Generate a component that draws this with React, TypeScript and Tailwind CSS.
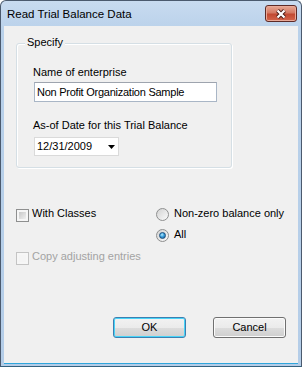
import React from 'react';

const CheckBox: React.FC<{ label: string; disabled?: boolean }> = ({ label, disabled }) => (
  <div className="flex items-start h-[13px] leading-[13px]">
    <span
      className={`mt-[2px] w-[13px] h-[13px] border p-[2px] bg-[#f6f6f6] ${
        disabled ? 'border-[#c4c4c4]' : 'border-[#8e8f8f]'
      }`}
    >
      <span
        className={`block w-full h-full ${
          disabled ? 'bg-[#f4f4f4]' : 'bg-[linear-gradient(135deg,#c8c8c8,#efefef)]'
        }`}
      />
    </span>
    <span className={`ml-[3px] ${disabled ? 'text-[#a3a3a3]' : 'text-black'}`}>{label}</span>
  </div>
);

const Radio: React.FC<{ label: string; checked?: boolean }> = ({ label, checked }) => (
  <div className="flex items-start h-[13px] leading-[13px]">
    <span className="mt-[1px] w-[13px] h-[13px] rounded-full border border-[#8e8f8f] bg-[linear-gradient(135deg,#d2d2d2,#fbfbfb)] flex items-center justify-center">
      {checked && (
        <span className="w-[7px] h-[7px] rounded-full border border-[#1b4f7e] bg-[radial-gradient(circle_at_40%_35%,#b8ecff_0%,#3aa0dc_45%,#17558f_100%)]" />
      )}
    </span>
    <span className="ml-[5px] text-black">{label}</span>
  </div>
);

const Button: React.FC<{ children: React.ReactNode; primary?: boolean }> = ({ children, primary }) => (
  <button
    className={`w-[73px] h-[21px] rounded-[3px] border text-[11px] leading-[13px] text-black bg-[linear-gradient(#f2f2f2,#ebebeb_50%,#dddddd_50%,#cfcfcf)] ${
      primary
        ? 'border-[#3c7fb1] shadow-[inset_0_0_0_1px_#48d4f8]'
        : 'border-[#707070] shadow-[inset_0_0_0_1px_#fbfbfb]'
    }`}
  >
    {children}
  </button>
);

const App: React.FC = () => {
  return (
    <div className="w-[302px] h-[367px] font-['Liberation_Sans',Arial,sans-serif] text-[11px] leading-[13px] text-black">
      <div className="w-full h-full flex flex-col rounded-t-[6px] border border-[#4b5a6e] border-b-[#34627f] bg-[linear-gradient(#c8dbf0,#b9d1ea_30px,#b4cde8)]">
        {/* title bar */}
        <div className="h-[25px] flex items-start justify-between">
          <span className="ml-[6px] mt-[6px] text-[11.5px] leading-[14px] text-black">Read Trial Balance Data</span>
          <button className="mt-[4px] mr-[4px] w-[32px] h-[17px] rounded-[3px] border border-[#5d2a26] shadow-[inset_0_0_0_1px_#e9a998] bg-[linear-gradient(#e8a894,#d47a64_45%,#c24a32_55%,#d4664c)] flex items-center justify-center">
            <svg width="12" height="10" viewBox="0 0 12 10">
              <path d="M2.5 1.5 L9.5 8.5 M9.5 1.5 L2.5 8.5" stroke="#4a1c16" strokeWidth="4" />
              <path d="M2.5 1.5 L9.5 8.5 M9.5 1.5 L2.5 8.5" stroke="#ffffff" strokeWidth="2.2" />
            </svg>
          </button>
        </div>

        {/* client area */}
        <div className="flex-1 mx-[3px] mb-[3px] bg-[#f0f0f0] flex flex-col shadow-[0_1px_0_#2fa6dc]">
          <div className="relative ml-[12px] mt-[17px] w-[216px] h-[125px] rounded-[3px] border border-[#d5dfe5] shadow-[inset_1px_1px_0_#ffffff,1px_1px_0_#ffffff]">
            <span className="absolute left-[8px] -top-[8px] px-[2px] bg-[#f0f0f0]">Specify</span>
            <div className="pl-[16px] pt-[22px] flex flex-col">
              <span>Name of enterprise</span>
              <div className="mt-[3px] ml-[1px] w-[183px] h-[20px] bg-white border border-[#a9b6c6] border-t-[#9ea4ae] flex items-center pl-[2px] tracking-[-0.25px]">
                Non Profit Organization Sample
              </div>
              <span className="mt-[17px]">As-of Date for this Trial Balance</span>
              <div className="mt-[5px] ml-[1px] w-[85px] h-[19px] bg-white border border-[#dadada] flex items-center justify-between pl-[2px] pr-[3px]">
                <span>12/31/2009</span>
                <svg width="7" height="4" viewBox="0 0 7 4">
                  <path d="M0 0 H7 L3.5 4 Z" fill="#000" />
                </svg>
              </div>
            </div>
          </div>

          <div className="mt-[39px] ml-[12px] grid grid-cols-[140px_1fr]">
            <CheckBox label="With Classes" />
            <Radio label="Non-zero balance only" />
            <div className="h-[21px]" />
            <div className="mt-[8px]">
              <Radio label="All" checked />
            </div>
            <div className="mt-[9px]">
              <CheckBox label="Copy adjusting entries" disabled />
            </div>
          </div>

          <div className="mt-[54px] ml-[109px] flex gap-[27px]">
            <Button primary>OK</Button>
            <Button>Cancel</Button>
          </div>
        </div>
      </div>
    </div>
  );
};

export default App;
